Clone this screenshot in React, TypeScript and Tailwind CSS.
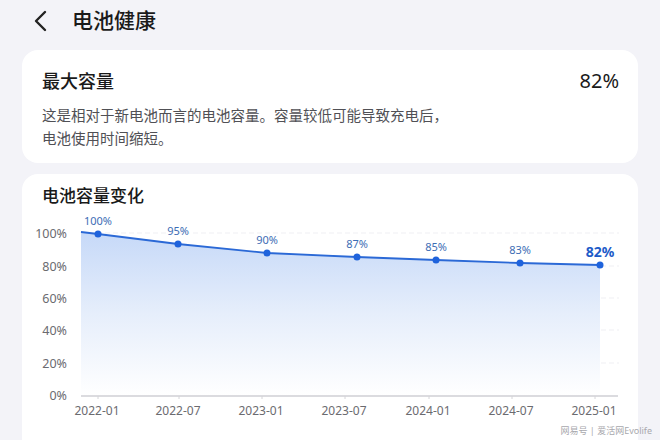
import React from 'react';

const font = { fontFamily: '"Noto Sans", "Noto Sans CJK SC", sans-serif' };

type Point = { label: string; x: number; y: number };

const points: Point[] = [
  { label: '100%', x: 98, y: 235 },
  { label: '95%', x: 178, y: 245 },
  { label: '90%', x: 267, y: 254 },
  { label: '87%', x: 357, y: 258 },
  { label: '85%', x: 436, y: 261 },
  { label: '83%', x: 520, y: 264 },
  { label: '82%', x: 600, y: 266 },
];

const yTicks = [
  { label: '100%', y: 234 },
  { label: '80%', y: 267 },
  { label: '60%', y: 299 },
  { label: '40%', y: 331 },
  { label: '20%', y: 364 },
  { label: '0%', y: 396 },
];

const xTicks = [
  { label: '2022-01', x: 98 },
  { label: '2022-07', x: 179 },
  { label: '2023-01', x: 262 },
  { label: '2023-07', x: 345 },
  { label: '2024-01', x: 429 },
  { label: '2024-07', x: 512 },
  { label: '2025-01', x: 595 },
];

const BASE = 397;
const LEFT = 81;

function CapacityChart() {
  const line = `M${LEFT} 233 ` + points.map((p) => `L${p.x} ${p.y}`).join(' ');
  const area = `${line} L600 ${BASE} L${LEFT} ${BASE} Z`;

  return (
    <svg width={616} height={231} viewBox="22 209 616 231" className="block">
      <defs>
        <linearGradient id="fill" gradientUnits="userSpaceOnUse" x1="0" y1="233" x2="0" y2={BASE}>
          <stop offset="0" stopColor="#c6d9f8" />
          <stop offset="0.5" stopColor="#e6eefb" />
          <stop offset="1" stopColor="#ffffff" />
        </linearGradient>
      </defs>

      {/* grid */}
      {yTicks.slice(0, -1).map((t) => (
        <line key={t.y} x1={LEFT} x2={619} y1={t.y} y2={t.y} stroke="#efeff3" strokeWidth={1} strokeDasharray="5 3" />
      ))}

      <path d={area} fill="url(#fill)" />
      <line x1={LEFT} x2={618} y1={BASE} y2={BASE} stroke="#cfcfd4" strokeWidth={1.5} />
      {xTicks.map((t) => (
        <line key={t.x} x1={t.x} x2={t.x} y1={BASE} y2={BASE + 3} stroke="#d4d4d8" strokeWidth={1} />
      ))}

      <path d={line} fill="none" stroke="#2b69d6" strokeWidth={1.8} strokeLinejoin="round" />
      {points.map((p) => (
        <circle key={p.x} cx={p.x} cy={p.y} r={3.5} fill="#1f63dc" />
      ))}

      {points.map((p, i) =>
        i === points.length - 1 ? (
          <text key={p.label} x={p.x} y={p.y - 8} textAnchor="middle" fontSize={14} fontWeight={700} fill="#1d5bc8" style={font}>
            {p.label}
          </text>
        ) : (
          <text key={p.label} x={p.x} y={p.y - 9} textAnchor="middle" fontSize={11} fill="#3d6db5" style={font}>
            {p.label}
          </text>
        )
      )}

      {yTicks.map((t) => (
        <text key={t.label} x={67} y={t.y + 4.5} textAnchor="end" fontSize={12.5} fill="#6b6b70" style={font}>
          {t.label}
        </text>
      ))}

      {xTicks.map((t) => (
        <text key={t.label} x={t.x - 1} y={415.5} textAnchor="middle" fontSize={12} fill="#6b6b70" style={font}>
          {t.label}
        </text>
      ))}
    </svg>
  );
}

export default function App() {
  return (
    <div className="relative h-[440px] w-[660px] overflow-hidden bg-[#f3f3f8] text-[#1a1a1a]" style={font}>
      <header className="flex h-[41px] items-center pl-[33px]">
        <svg width="14" height="22" viewBox="0 0 14 22" fill="none">
          <path d="M12 2 L3 11 L12 20" stroke="#222" strokeWidth="2.4" strokeLinecap="round" strokeLinejoin="round" />
        </svg>
        <h1 className="ml-[25px] text-[21px] font-medium leading-none">电池健康</h1>
      </header>

      <div className="mt-[9px] flex flex-col gap-[11px] px-[22px]">
        <section className="rounded-[16px] bg-white pb-[13px] pl-[20px] pr-[19px] pt-[18px]">
          <div className="flex h-[26px] items-center justify-between">
            <h2 className="text-[18px] font-medium">最大容量</h2>
            <span className="text-[20px]">82%</span>
          </div>
          <p className="mt-[10px] text-[14.5px] leading-[23px] text-[#505055]">
            这是相对于新电池而言的电池容量。容量较低可能导致充电后，
            <br />
            电池使用时间缩短。
          </p>
        </section>

        <section className="rounded-[16px] bg-white pb-[24px] pt-[10px]">
          <h2 className="h-[24px] pl-[20px] text-[17px] font-medium leading-[24px]">电池容量变化</h2>
          <CapacityChart />
        </section>
      </div>

      <div className="absolute bottom-[3px] right-[8px] text-[9px] text-[#a8a8ad]">网易号 | 爱活网Evolife</div>
    </div>
  );
}
